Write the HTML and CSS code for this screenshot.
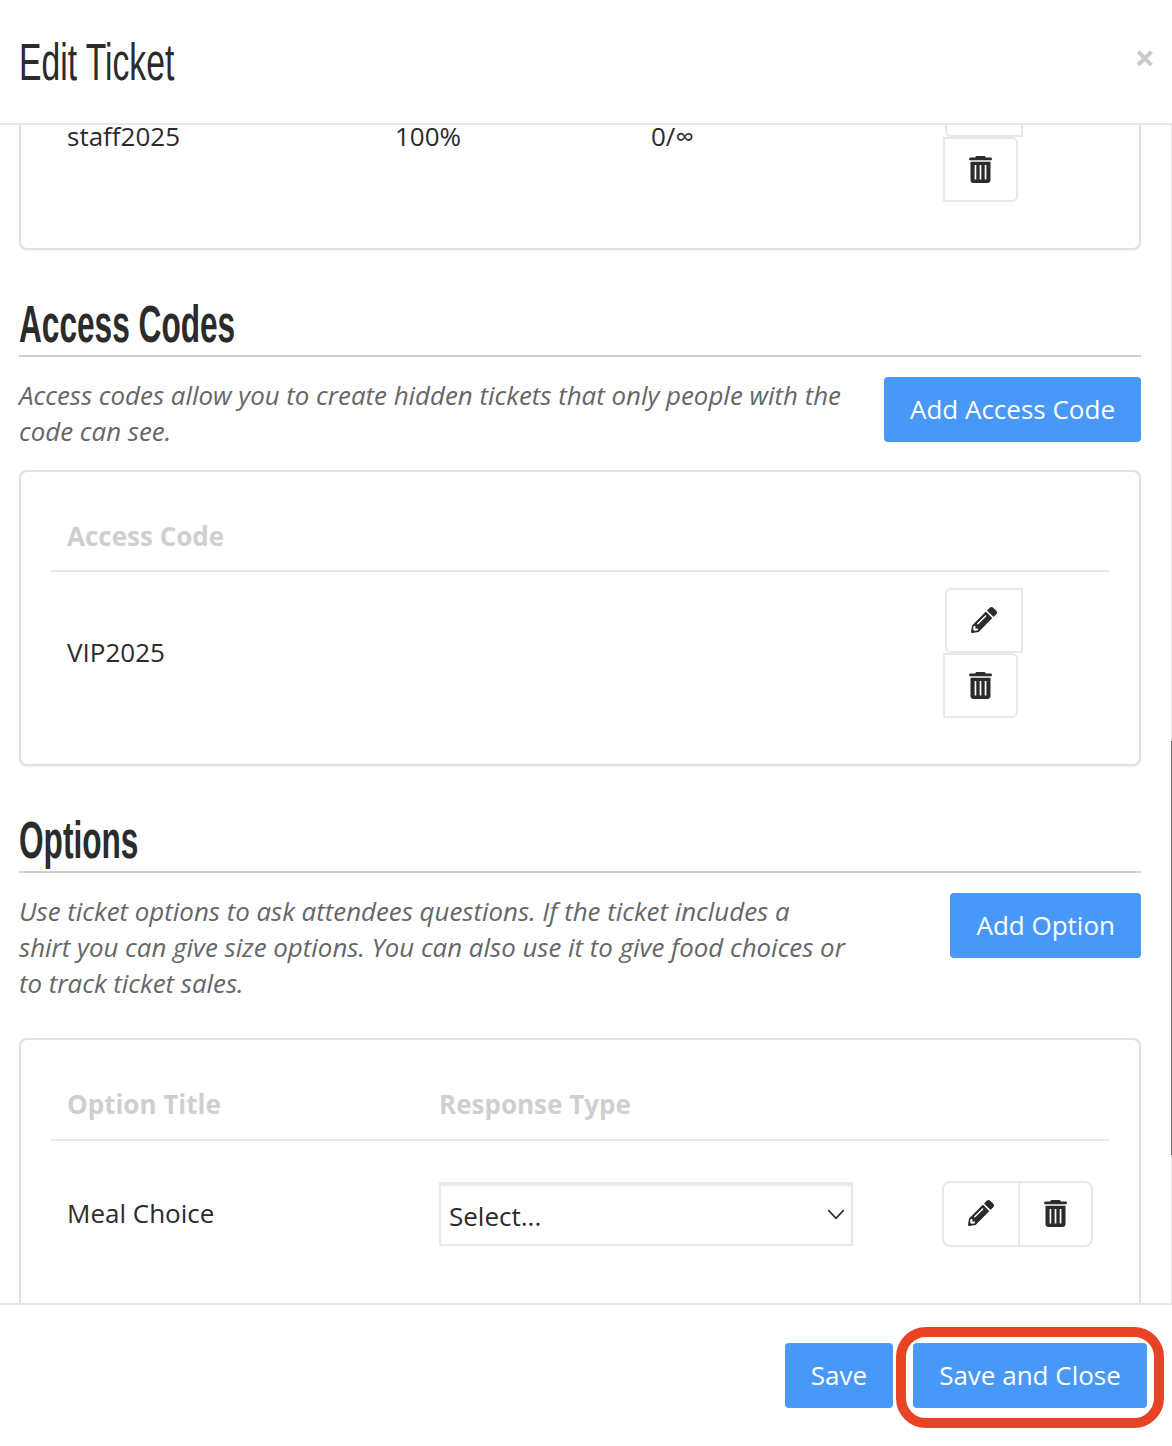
FILE: index.html
```html
<!DOCTYPE html>
<html lang="en">
<head>
<meta charset="utf-8">
<title>Edit Ticket</title>
<link rel="stylesheet" href="styles.css">
</head>
<body>
<svg class="defs" aria-hidden="true">
  <symbol id="pencil" viewBox="0 0 512 512"><path d="M497.9 142.1l-46.1 46.1c-4.7 4.7-12.3 4.7-17 0l-111-111c-4.7-4.7-4.7-12.3 0-17l46.1-46.1c18.7-18.7 49.1-18.7 67.9 0l60.1 60.1c18.8 18.7 18.8 49.1 0 67.9zM284.2 99.8L21.6 362.4.4 483.9c-2.9 16.4 11.4 30.6 27.8 27.8l121.5-21.3 262.6-262.6c4.7-4.7 4.7-12.3 0-17l-111-111c-4.8-4.7-12.4-4.7-17.1 0zM124.1 339.9c-5.5-5.5-5.5-14.3 0-19.8l154-154c5.5-5.5 14.3-5.5 19.8 0s5.5 14.3 0 19.8l-154 154c-5.5 5.5-14.3 5.5-19.8 0zM88 424h48v36.3l-64.5 11.3-31.1-31.1L51.7 376H88v48z"/></symbol>
  <symbol id="trash" viewBox="0 0 23 27"><path fill-rule="evenodd" d="M8 0h7c.9 0 1.500.5 1.800 1.500H21.500c.8 0 1.500.7 1.500 1.400s-.7 1.400-1.500 1.400H1.500C.7 4.300 0 3.600 0 2.900S.7 1.500 1.500 1.500H6.200C6.500.5 7.100 0 8 0zM1.500 5.700h20V24c0 1.700-1.300 3-3 3h-14c-1.700 0-3-1.300-3-3zM5.600 9v14.500h1.700V9zM10.650 9v14.500h1.700V9zM15.700 9v14.500h1.700V9z"/></symbol>
</svg>
<div class="modal">
  <header class="modal-head">
    <h1 class="modal-title">Edit Ticket</h1>
    <span class="close">×</span>
  </header>
  <main class="modal-body">
    <div class="card card-clipped">
      <div class="row row-promo">
        <span class="cell">staff2025</span>
        <span class="cell">100%</span>
        <span class="cell">0/∞</span>
        <div class="actions">
          <button class="icon-btn edit"><svg class="ico-pencil"><use href="#pencil"/></svg></button>
          <button class="icon-btn del"><svg class="ico-trash"><use href="#trash"/></svg></button>
        </div>
      </div>
    </div>

    <section class="section">
      <h2 class="section-title"><span class="section-label">Access Codes</span></h2>
      <div class="intro">
        <p class="intro-text">Access codes allow you to create hidden tickets that only people with the code can see.</p>
        <button class="btn">Add Access Code</button>
      </div>
      <div class="card">
        <div class="row-head"><span>Access Code</span></div>
        <div class="row row-code">
          <span class="cell">VIP2025</span>
          <div class="actions">
            <button class="icon-btn edit"><svg class="ico-pencil"><use href="#pencil"/></svg></button>
            <button class="icon-btn del"><svg class="ico-trash"><use href="#trash"/></svg></button>
          </div>
        </div>
      </div>
    </section>

    <section class="section">
      <h2 class="section-title"><span class="section-label">Options</span></h2>
      <div class="intro intro-long">
        <p class="intro-text">Use ticket options to ask attendees questions. If the ticket includes a shirt you can give size options. You can also use it to give food choices or to track ticket sales.</p>
        <button class="btn">Add Option</button>
      </div>
      <div class="card">
        <div class="row-head row-head-option"><span>Option Title</span><span>Response Type</span></div>
        <div class="row row-option">
          <span class="cell">Meal Choice</span>
          <div class="select"><span>Select...</span>
            <svg class="chevron" viewBox="0 0 16 10"><path d="M1 1l7 7.500L15 1" fill="none" stroke="#2b2b2b" stroke-width="1.500"/></svg>
          </div>
          <div class="btn-group">
            <button class="group-btn"><svg class="ico-pencil"><use href="#pencil"/></svg></button>
            <button class="group-btn"><svg class="ico-trash"><use href="#trash"/></svg></button>
          </div>
        </div>
      </div>
    </section>
  </main>
  <footer class="modal-foot">
    <button class="btn btn-save">Save</button>
    <button class="btn btn-close">Save and Close</button>
    <span class="highlight"></span>
  </footer>
  <span class="scroll-line"></span>
  <span class="scroll-thumb"></span>
</div>
</body>
</html>
```

FILE: styles.css
```css
* { box-sizing: border-box; }
html, body { margin: 0; padding: 0; background: #fff; }
body { width: 1172px; height: 1446px; overflow: hidden; font-family: "Open Sans", sans-serif; font-size: 26px; color: #2b2b2b; }
.defs { position: absolute; width: 0; height: 0; }
button { font-family: inherit; cursor: pointer; }

.modal { position: relative; width: 1172px; height: 1446px; display: flex; flex-direction: column; overflow: hidden; }

.modal-head { height: 125px; flex: none; border-bottom: 2px solid #e6e6e6; padding-left: 19px; display: flex; align-items: flex-start; justify-content: space-between; }
.modal-title { margin: 30px 0 0; font-family: "Liberation Sans", sans-serif; font-weight: 400; font-size: 51px; line-height: 66px; color: #2b2b2b; transform: scaleX(.66); transform-origin: left center; white-space: nowrap; }
.close { margin: 34px 17px 0 0; font-size: 36px; line-height: 48px; font-weight: 700; color: #c9c9c9; }

.modal-body { flex: 1; min-height: 0; overflow: hidden; padding: 0 31px 0 19px; }
.modal-foot { position: relative; height: 143px; flex: none; border-top: 2px solid #e6e6e6; padding: 38px 25px 0 0; display: flex; justify-content: flex-end; align-items: flex-start; gap: 20px; }

.card { border: 2px solid #e0e0e0; border-radius: 8px; box-shadow: 0 1px 2px rgba(0,0,0,.06); padding: 30px; background: #fff; }
.card-clipped { margin-top: -102px; padding-top: 31px; }

.section-title { margin: 0; height: 107px; padding-bottom: 0; display: flex; align-items: flex-end; border-bottom: 2px solid #cfcfcf; font-family: "Liberation Sans", sans-serif; font-weight: 700; font-size: 51px; line-height: 60px; color: #2b2b2b; }
.section-label { display: inline-block; transform: scaleX(.62); transform-origin: left center; white-space: nowrap; }

.intro { display: flex; justify-content: space-between; align-items: flex-start; margin: 20px 0 21px; }
.intro-long { margin-bottom: 37px; }
.intro-text { margin: 0; width: 827px; flex: none; font-style: italic; font-size: 25.87px; line-height: 36px; color: #666; }

.btn { flex: none; height: 65px; padding: 0 26px 2px; border: 0; border-radius: 4px; background: #4899f7; color: #fff; font-size: 26px; white-space: nowrap; }
.btn-save { width: 108px; padding: 0 0 2px; }
.btn-close { width: 234px; padding: 0 0 2px; }

.highlight { position: absolute; left: 896px; top: 22px; width: 268px; height: 101px; border: 10px solid #e94326; border-radius: 30px; }

.row-head { height: 70px; padding: 0 16px; display: flex; align-items: center; border-bottom: 2px solid #e6e6e6; font-weight: 700; font-size: 26px; color: #cfcfcf; }
.row-head-option { height: 71px; padding-bottom: 2px; }
.row-head-option span:first-child { width: 372px; }
.row { display: grid; align-items: center; padding: 16px; }
.cell { margin-bottom: 2px; }
.row-promo { grid-template-columns: 328px 256px 292px 150px; }
.row-code { grid-template-columns: 876px 150px; }
.row-option { grid-template-columns: 372px 503px 151px; padding-top: 40px; padding-bottom: 60px; }

.actions { display: flex; flex-direction: column; align-items: flex-start; }
.icon-btn { display: flex; align-items: center; justify-content: center; height: 65px; padding: 0; background: #fff; border: 2px solid #e8e8e8; }
.icon-btn.edit { width: 78px; margin-left: 2px; padding-bottom: 2px; border-radius: 6px 0 0 6px; }
.icon-btn.del { width: 75px; border-radius: 0 6px 6px 0; }
.ico-pencil { width: 26px; height: 26px; fill: #2b2b2b; }
.ico-trash { width: 23px; height: 27px; fill: #2b2b2b; }

.select { position: relative; width: 414px; height: 64px; padding: 13px 8px 0; border: 2px solid #e8e8e8; border-top-width: 3px; box-shadow: inset 0 2px 2px rgba(0,0,0,.05); }
.chevron { position: absolute; right: 6px; top: 24px; width: 18px; height: 11px; }

.btn-group { display: flex; width: 151px; height: 66px; border: 2px solid #e8e8e8; border-radius: 8px; }
.group-btn { flex: 1; display: flex; align-items: center; justify-content: center; padding: 0 0 2px; background: none; border: 0; }
.group-btn:first-child { flex: none; width: 74px; }
.group-btn + .group-btn { border-left: 2px solid #e8e8e8; }

.scroll-line { position: absolute; right: 0; top: 125px; bottom: 143px; width: 1px; background: #e8e8e8; }
.scroll-thumb { position: absolute; right: 0; top: 741px; width: 1px; height: 414px; background: #777; }
```
